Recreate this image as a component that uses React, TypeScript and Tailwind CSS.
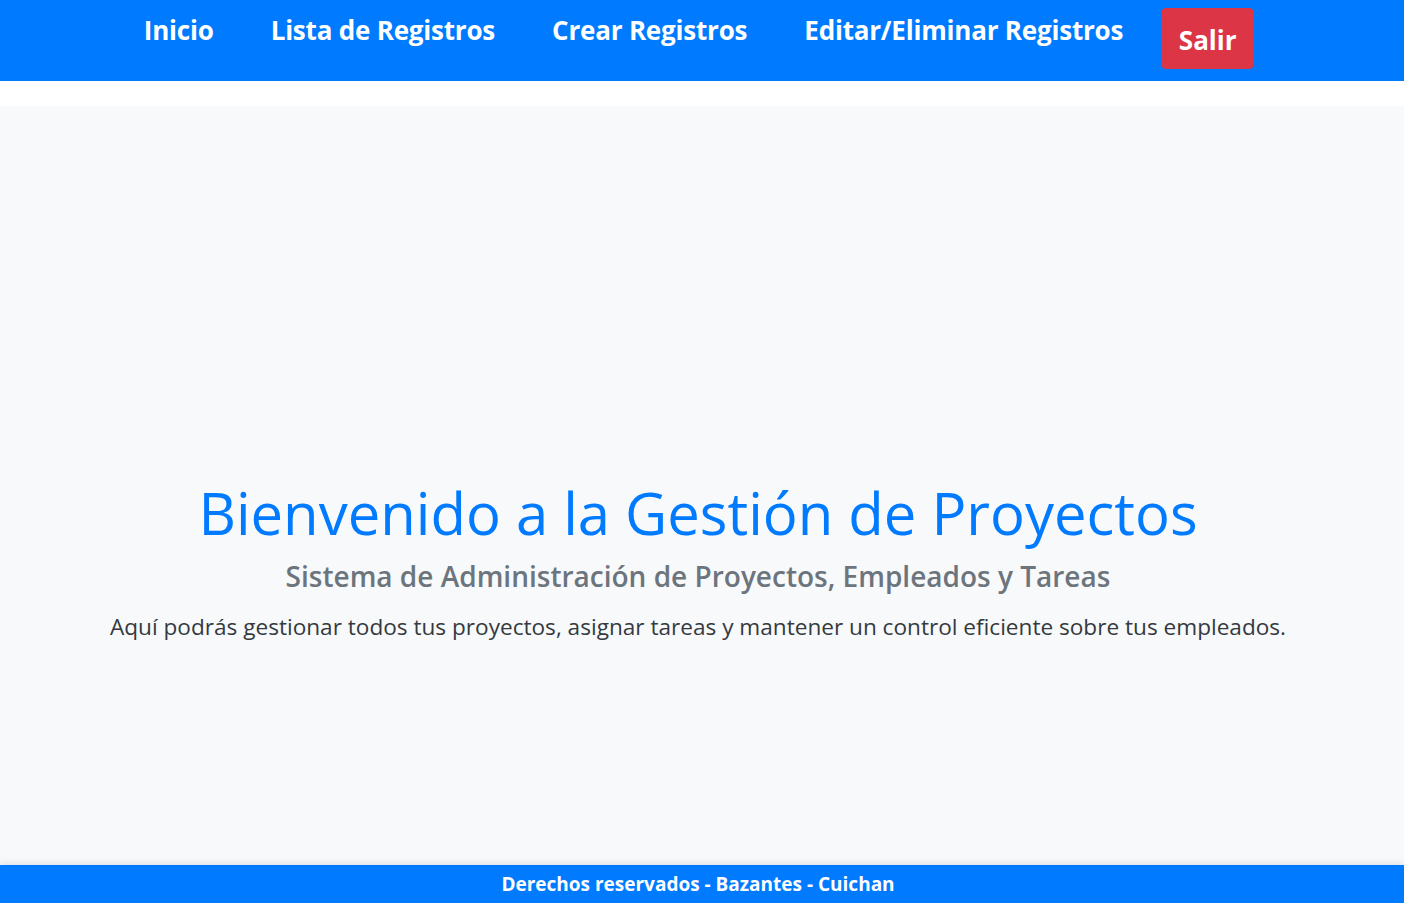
const font = { fontFamily: '"Open Sans", "Noto Sans", sans-serif' };

const links = ['Inicio', 'Lista de Registros', 'Crear Registros', 'Editar/Eliminar Registros'];

export default function App() {
  return (
    <div className="min-h-screen flex flex-col bg-white" style={font}>
      {/* Navbar */}
      <header className="h-[81px] bg-[#007bff] shadow-[0_2px_6px_rgba(0,0,0,0.08)]">
        <nav className="flex items-start justify-center pl-[2px] pr-2 pt-[12px]">
          <ul className="flex items-start gap-[57px]">
            {links.map((l) => (
              <li key={l}>
                <a href="#" className="block text-[26px] leading-[36px] font-bold text-white tracking-[-0.2px]">
                  {l}
                </a>
              </li>
            ))}
          </ul>
          <button className="ml-[38px] mt-[-4px] h-[61px] w-[93px] rounded-[5px] bg-[#dc3545] text-white text-[26px] font-bold pt-[4px]">
            Salir
          </button>
        </nav>
      </header>

      <div className="h-[25px] bg-white" />

      {/* Main */}
      <main className="flex-1 bg-[#f8f9fa] flex flex-col items-center pr-2 pt-[371px]">
        <h1 className="text-[58px] leading-[72px] text-[#007bff] font-medium">
          Bienvenido a la Gestión de Proyectos
        </h1>
        <h3 className="mt-[8px] text-[28px] leading-[38px] text-[#6c757d] font-semibold">
          Sistema de Administración de Proyectos, Empleados y Tareas
        </h3>
        <p className="mt-[15px] text-[22.6px] leading-[34px] text-[#343a40]">
          Aquí podrás gestionar todos tus proyectos, asignar tareas y mantener un control eficiente sobre tus empleados.
        </p>
      </main>

      {/* Footer */}
      <footer className="h-[38px] bg-[#007bff] shadow-[0_-2px_6px_rgba(0,0,0,0.1)] flex items-center justify-center pr-2">
        <span className="text-[19px] font-bold text-white">
          Derechos reservados - Bazantes - Cuichan
        </span>
      </footer>
    </div>
  );
}
